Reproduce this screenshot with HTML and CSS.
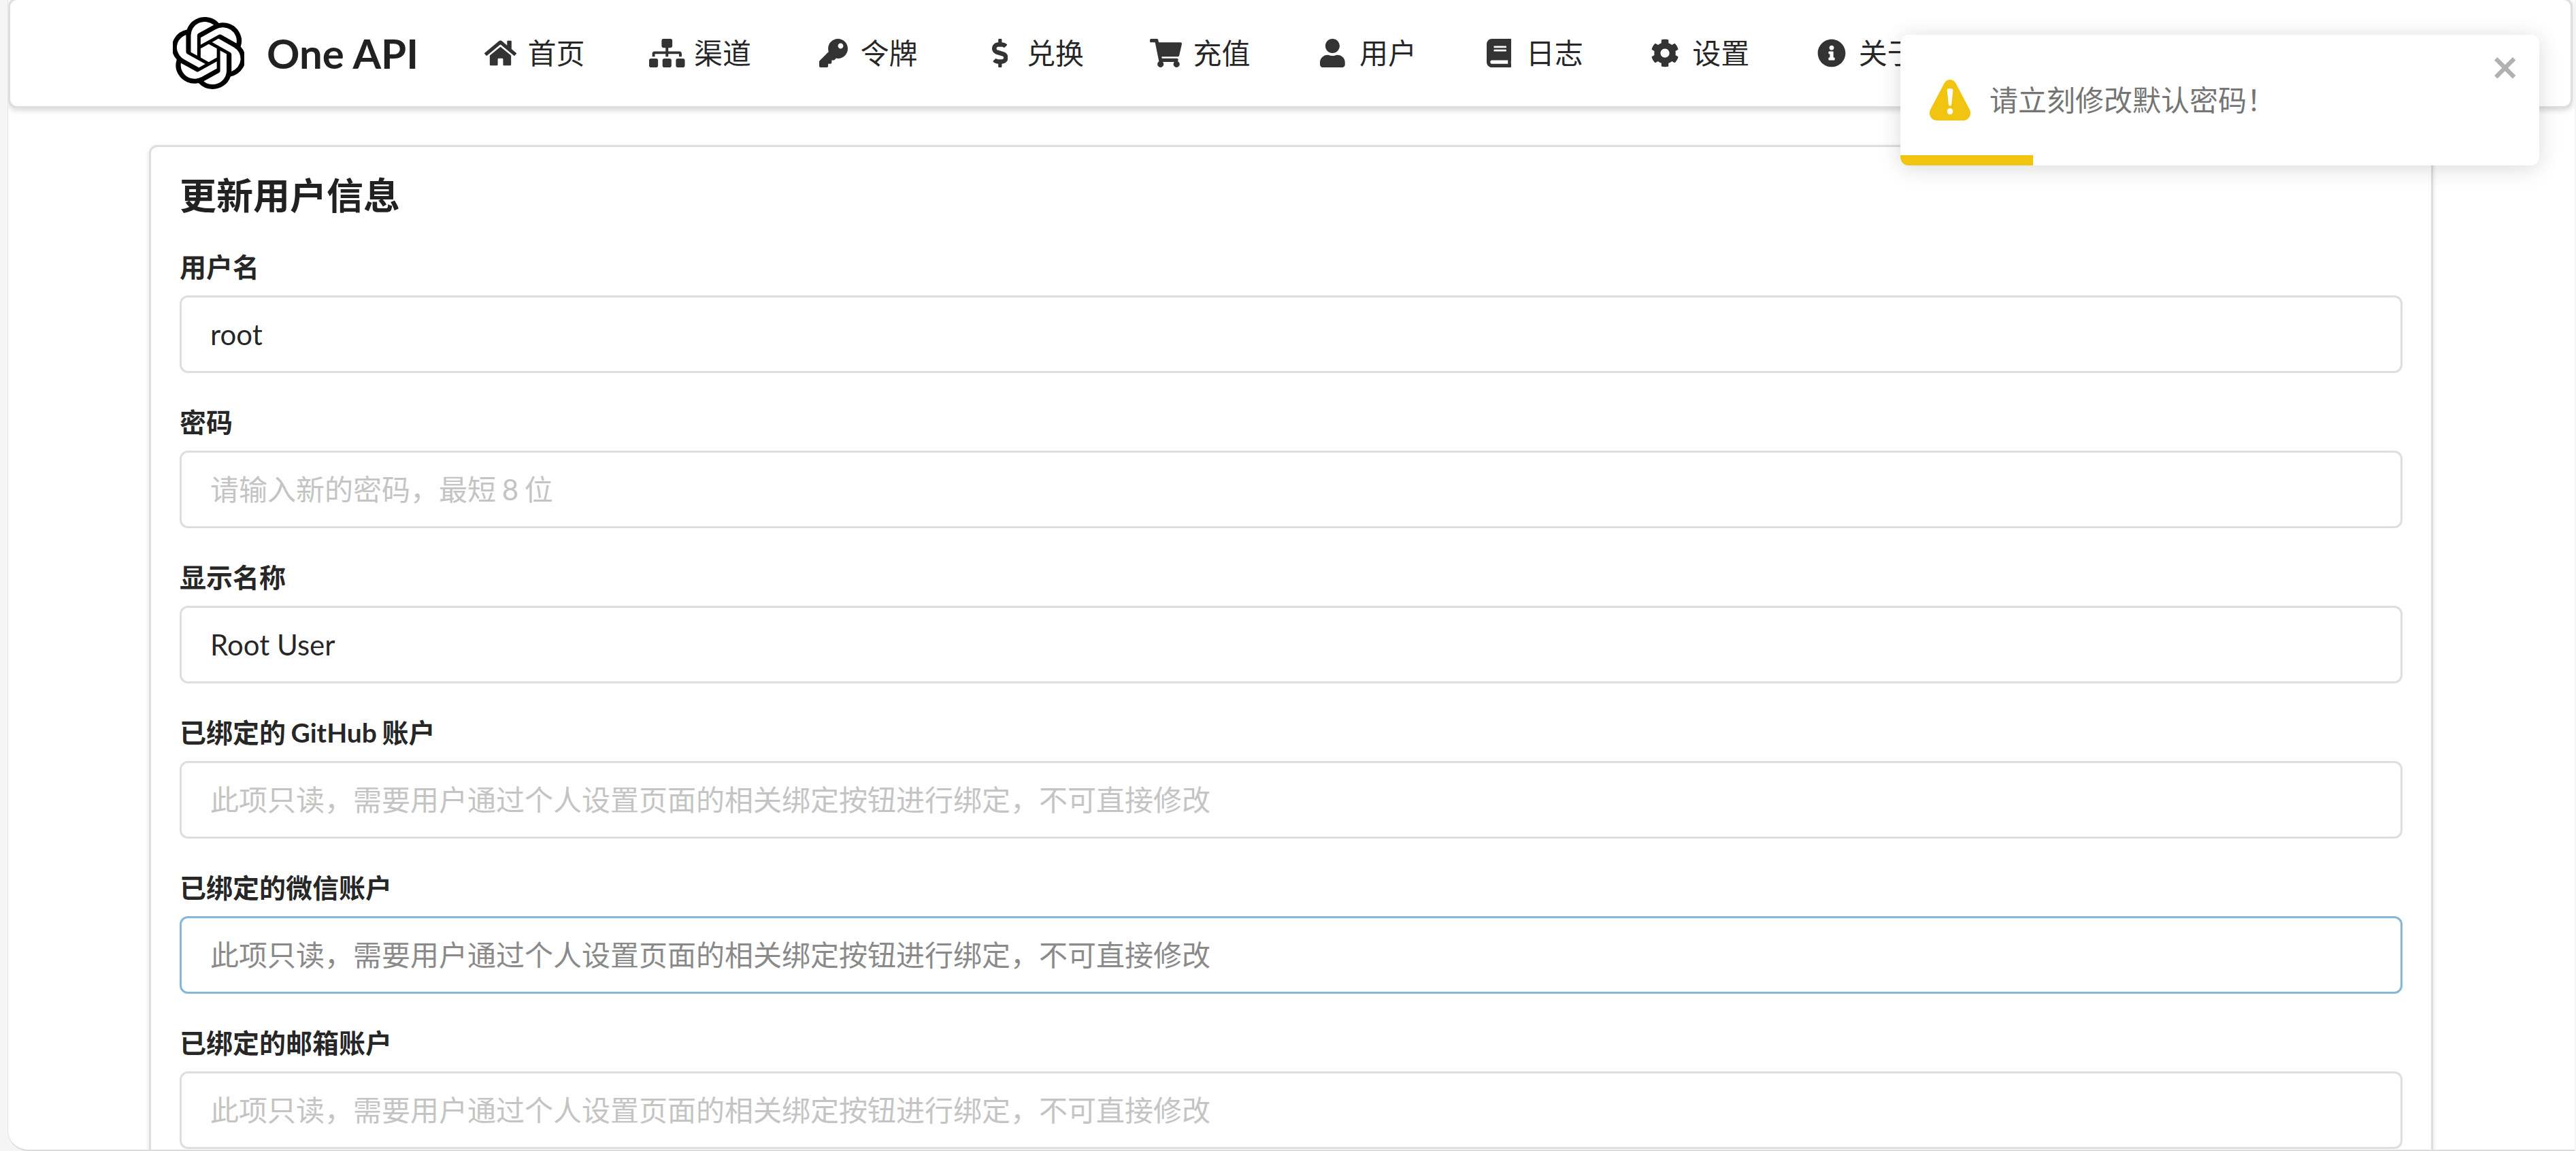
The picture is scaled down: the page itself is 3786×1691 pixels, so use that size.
FILE: index.html
```html
<!DOCTYPE html>
<html lang="zh-CN">
<head>
<meta charset="utf-8">
<title>One API</title>
<link rel="stylesheet" href="styles.css">
</head>
<body>
<div class="window">
  <header class="navbar">
    <a class="brand">
      <svg class="logo" width="105" height="106" viewBox="0.45 0 23 24" preserveAspectRatio="none"><path fill="#000" d="M22.2819 9.8211a5.9847 5.9847 0 0 0-.5157-4.9108 6.0462 6.0462 0 0 0-6.5098-2.9A6.0651 6.0651 0 0 0 4.9807 4.1818a5.9847 5.9847 0 0 0-3.9977 2.9 6.0462 6.0462 0 0 0 .7427 7.0966 5.98 5.98 0 0 0 .511 4.9107 6.051 6.051 0 0 0 6.5146 2.9001A5.9847 5.9847 0 0 0 13.2599 24a6.0557 6.0557 0 0 0 5.7718-4.2058 5.9894 5.9894 0 0 0 3.9977-2.9001 6.0557 6.0557 0 0 0-.7475-7.0729zm-9.022 12.6081a4.4755 4.4755 0 0 1-2.8764-1.0408l.1419-.0804 4.7783-2.7582a.7948.7948 0 0 0 .3927-.6813v-6.7369l2.02 1.1686a.071.071 0 0 1 .038.052v5.5826a4.504 4.504 0 0 1-4.4945 4.4944zm-9.6607-4.1254a4.4708 4.4708 0 0 1-.5346-3.0137l.142.0852 4.783 2.7582a.7712.7712 0 0 0 .7806 0l5.8428-3.3685v2.3324a.0804.0804 0 0 1-.0332.0615L9.74 19.9502a4.4992 4.4992 0 0 1-6.1408-1.6464zM2.3408 7.8956a4.485 4.485 0 0 1 2.3655-1.9728V11.6a.7664.7664 0 0 0 .3879.6765l5.8144 3.3543-2.0201 1.1685a.0757.0757 0 0 1-.071 0l-4.8303-2.7865A4.504 4.504 0 0 1 2.3408 7.872zm16.5963 3.8558L13.1038 8.364 15.1192 7.2a.0757.0757 0 0 1 .071 0l4.8303 2.7913a4.4944 4.4944 0 0 1-.6765 8.1042v-5.6772a.79.79 0 0 0-.407-.667zm2.0107-3.0231l-.142-.0852-4.7735-2.7818a.7759.7759 0 0 0-.7854 0L9.409 9.2297V6.8974a.0662.0662 0 0 1 .0284-.0615l4.8303-2.7866a4.4992 4.4992 0 0 1 6.6802 4.66zM8.3065 12.863l-2.02-1.1638a.0804.0804 0 0 1-.038-.0567V6.0742a4.4992 4.4992 0 0 1 7.3757-3.4537l-.142.0805L8.704 5.459a.7948.7948 0 0 0-.3927.6813zm1.0976-2.3654l2.602-1.4998 2.6069 1.4998v2.9994l-2.5974 1.4997-2.6067-1.4997Z"/></svg>
      <span class="brand-name">One API</span>
    </a>
    <a class="item"><span class="ic"><svg width="47" height="42" viewBox="0 0 576 512"><path d="M280.37 148.26L96 300.11V464a16 16 0 0 0 16 16l112.06-.29a16 16 0 0 0 15.92-16V368a16 16 0 0 1 16-16h64a16 16 0 0 1 16 16v95.64a16 16 0 0 0 16 16.05L464 480a16 16 0 0 0 16-16V300L295.67 148.26a12.19 12.19 0 0 0-15.3 0zM571.6 251.47L488 182.56V44.05a12 12 0 0 0-12-12h-56a12 12 0 0 0-12 12v72.61L318.47 43a48 48 0 0 0-61 0L4.34 251.47a12 12 0 0 0-1.6 16.9l25.5 31A12 12 0 0 0 45.15 301l235.22-193.74a12.19 12.19 0 0 1 15.3 0L530.9 301a12 12 0 0 0 16.9-1.6l25.5-31a12 12 0 0 0-1.7-16.93z"/></svg></span>首页</a>
    <a class="item"><span class="ic"><svg width="52.5" height="42" viewBox="0 0 640 512"><path d="M128 352H32c-17.67 0-32 14.33-32 32v96c0 17.67 14.33 32 32 32h96c17.67 0 32-14.33 32-32v-96c0-17.67-14.33-32-32-32zm-24-80h192v48h48v-48h192v48h48v-57.59c0-21.17-17.23-38.41-38.41-38.41H344v-64h40c17.67 0 32-14.33 32-32V32c0-17.67-14.33-32-32-32H256c-17.67 0-32 14.33-32 32v96c0 17.67 14.33 32 32 32h40v64H94.41C73.23 224 56 241.23 56 262.41V320h48v-48zm264 80h-96c-17.67 0-32 14.33-32 32v96c0 17.67 14.33 32 32 32h96c17.67 0 32-14.33 32-32v-96c0-17.67-14.33-32-32-32zm240 0h-96c-17.67 0-32 14.33-32 32v96c0 17.67 14.33 32 32 32h96c17.67 0 32-14.33 32-32v-96c0-17.67-14.33-32-32-32z"/></svg></span>渠道</a>
    <a class="item"><span class="ic"><svg width="42" height="42" viewBox="0 0 512 512"><path d="M512 176.001C512 273.203 433.202 352 336 352c-11.22 0-22.19-1.062-32.827-3.069l-24.012 27.014A23.999 23.999 0 0 1 261.223 384H224v40c0 13.255-10.745 24-24 24h-40v40c0 13.255-10.745 24-24 24H24c-13.255 0-24-10.745-24-24v-78.059c0-6.365 2.529-12.47 7.029-16.971l161.802-161.802C163.108 213.814 160 195.271 160 176 160 78.798 238.797.001 335.999 0 433.488-.001 512 78.511 512 176.001zM336 128c0 26.51 21.49 48 48 48s48-21.49 48-48-21.49-48-48-48-48 21.49-48 48z"/></svg></span>令牌</a>
    <a class="item"><span class="ic"><svg width="23.6" height="42" viewBox="0 0 288 512"><path d="M209.2 233.4l-108-31.6C88.7 198.2 80 186.5 80 173.5c0-16.3 13.2-29.5 29.5-29.5h66.3c12.2 0 24.2 3.7 34.2 10.5 6.1 4.1 14.3 3.1 19.5-2l34.8-34c7.1-6.9 6.1-18.4-1.8-24.5C238 74.8 207.4 64.1 176 64V16c0-8.8-7.2-16-16-16h-32c-8.8 0-16 7.2-16 16v48h-2.5C45.8 64-5.4 118.7.5 183.6c4.2 46.1 39.4 83.6 83.8 96.6l102.5 30c12.5 3.7 21.2 15.3 21.2 28.3 0 16.3-13.2 29.5-29.5 29.5h-66.3C100 368 88 364.3 78 357.5c-6.1-4.1-14.3-3.1-19.5 2l-34.8 34c-7.1 6.9-6.1 18.4 1.8 24.5 24.5 19.2 55.1 29.9 86.5 30v48c0 8.8 7.2 16 16 16h32c8.8 0 16-7.2 16-16v-48.2c46.6-.9 90.3-28.6 105.7-72.7 21.5-61.6-14.6-124.8-72.5-141.7z"/></svg></span>兑换</a>
    <a class="item"><span class="ic"><svg width="47" height="42" viewBox="0 0 576 512"><path d="M528.12 301.319l47.273-208C578.806 78.301 567.391 64 551.99 64H159.208l-9.166-44.81C147.758 8.021 137.93 0 126.529 0H24C10.745 0 0 10.745 0 24v16c0 13.255 10.745 24 24 24h69.883l70.248 343.435C147.325 417.1 136 435.222 136 456c0 30.928 25.072 56 56 56s56-25.072 56-56c0-15.674-6.447-29.835-16.824-40h209.647C430.447 426.165 424 440.326 424 456c0 30.928 25.072 56 56 56s56-25.072 56-56c0-22.172-12.888-41.332-31.579-50.405l5.517-24.276c3.413-15.018-8.002-29.319-23.403-29.319H218.117l-6.545-32h293.145c11.206 0 20.92-7.754 23.403-18.681z"/></svg></span>充值</a>
    <a class="item"><span class="ic"><svg width="36.75" height="42" viewBox="0 0 448 512"><path d="M224 256c70.7 0 128-57.3 128-128S294.7 0 224 0 96 57.3 96 128s57.3 128 128 128zm89.6 32h-16.7c-22.2 10.2-46.9 16-72.9 16s-50.6-5.8-72.9-16h-16.7C60.2 288 0 348.2 0 422.4V464c0 26.5 21.5 48 48 48h352c26.5 0 48-21.5 48-48v-41.6c0-74.2-60.2-134.4-134.4-134.4z"/></svg></span>用户</a>
    <a class="item"><span class="ic"><svg width="36.75" height="42" viewBox="0 0 448 512"><path d="M448 360V24c0-13.3-10.7-24-24-24H96C43 0 0 43 0 96v320c0 53 43 96 96 96h328c13.3 0 24-10.7 24-24v-16c0-7.5-3.5-14.3-8.9-18.7-4.2-15.4-4.2-59.3 0-74.7 5.4-4.3 8.9-11.1 8.9-18.6zM128 134c0-3.3 2.7-6 6-6h212c3.3 0 6 2.7 6 6v20c0 3.3-2.7 6-6 6H134c-3.3 0-6-2.7-6-6v-20zm0 64c0-3.3 2.7-6 6-6h212c3.3 0 6 2.7 6 6v20c0 3.3-2.7 6-6 6H134c-3.3 0-6-2.7-6-6v-20zm253.4 250H96c-17.7 0-32-14.3-32-32 0-17.6 14.4-32 32-32h285.4c-1.9 17.1-1.9 46.9 0 64z"/></svg></span>日志</a>
    <a class="item"><span class="ic"><svg width="42" height="42" viewBox="0 0 512 512"><path d="M487.4 315.7l-42.6-24.6c4.3-23.2 4.3-47 0-70.2l42.6-24.6c4.9-2.8 7.1-8.6 5.5-14-11.1-35.6-30-67.8-54.7-94.6-3.8-4.1-10-5.1-14.8-2.3L380.8 110c-17.9-15.4-38.5-27.3-60.8-35.1V25.8c0-5.6-3.9-10.5-9.4-11.7-36.7-8.2-74.3-7.8-109.2 0-5.5 1.2-9.4 6.1-9.4 11.7V75c-22.2 7.9-42.8 19.8-60.8 35.1L88.7 85.5c-4.9-2.8-11-1.9-14.8 2.3-24.7 26.7-43.6 58.9-54.7 94.6-1.7 5.4.6 11.2 5.5 14L67.3 221c-4.3 23.2-4.3 47 0 70.2l-42.6 24.6c-4.9 2.8-7.1 8.6-5.5 14 11.1 35.6 30 67.8 54.7 94.6 3.8 4.1 10 5.1 14.8 2.3l42.6-24.6c17.9 15.4 38.5 27.3 60.8 35.1v49.2c0 5.6 3.9 10.5 9.4 11.7 36.7 8.2 74.3 7.8 109.2 0 5.5-1.2 9.4-6.1 9.4-11.7v-49.2c22.2-7.9 42.8-19.8 60.8-35.1l42.6 24.6c4.9 2.8 11 1.9 14.8-2.3 24.7-26.7 43.6-58.9 54.7-94.6 1.5-5.5-.7-11.3-5.6-14.1zM256 336c-44.1 0-80-35.9-80-80s35.9-80 80-80 80 35.9 80 80-35.9 80-80 80z"/></svg></span>设置</a>
    <a class="item"><span class="ic"><svg width="42" height="42" viewBox="0 0 512 512"><path d="M256 8C119.043 8 8 119.083 8 256c0 136.997 111.043 248 248 248s248-111.003 248-248C504 119.083 392.957 8 256 8zm0 110c23.196 0 42 18.804 42 42s-18.804 42-42 42-42-18.804-42-42 18.804-42 42-42zm56 254c0 6.627-5.373 12-12 12h-88c-6.627 0-12-5.373-12-12v-24c0-6.627 5.373-12 12-12h12v-64h-12c-6.627 0-12-5.373-12-12v-24c0-6.627 5.373-12 12-12h64c6.627 0 12 5.373 12 12v100h12c6.627 0 12 5.373 12 12v24z"/></svg></span>关于</a>
  </header>

  <main class="card">
    <h3 class="title">更新用户信息</h3>
    <form class="form">
      <div class="field">
        <label class="label">用户名</label>
        <input class="input" type="text" value="root">
      </div>
      <div class="field">
        <label class="label">密码</label>
        <input class="input" type="text" placeholder="请输入新的密码，最短 8 位">
      </div>
      <div class="field">
        <label class="label">显示名称</label>
        <input class="input" type="text" value="Root User">
      </div>
      <div class="field">
        <label class="label">已绑定的 GitHub 账户</label>
        <input class="input" type="text" readonly placeholder="此项只读，需要用户通过个人设置页面的相关绑定按钮进行绑定，不可直接修改">
      </div>
      <div class="field">
        <label class="label">已绑定的微信账户</label>
        <input class="input input-focus" type="text" readonly placeholder="此项只读，需要用户通过个人设置页面的相关绑定按钮进行绑定，不可直接修改">
      </div>
      <div class="field">
        <label class="label">已绑定的邮箱账户</label>
        <input class="input" type="text" readonly placeholder="此项只读，需要用户通过个人设置页面的相关绑定按钮进行绑定，不可直接修改">
      </div>
    </form>
  </main>

  <aside class="toast">
    <svg class="toast-icon" width="60" height="60" viewBox="0 0 24 24"><path d="M23.32 17.191L15.438 2.184C14.728.833 13.416 0 11.996 0c-1.42 0-2.733.833-3.443 2.184L.533 17.448a4.744 4.744 0 000 4.368C1.243 23.167 2.555 24 3.975 24h16.05C22.22 24 24 22.044 24 19.632c0-.904-.251-1.746-.68-2.44zm-9.622 1.46c0 1.033-.724 1.823-1.698 1.823s-1.698-.79-1.698-1.822v-.043c0-1.028.724-1.822 1.698-1.822s1.698.79 1.698 1.822v.043zm.039-12.285l-.84 8.06c-.057.581-.408.943-.897.943-.49 0-.84-.367-.896-.942l-.84-8.065c-.057-.624.25-1.095.779-1.095h1.91c.528.005.84.476.784 1.1z"/></svg>
    <span class="toast-text">请立刻修改默认密码！</span>
    <svg class="toast-close" width="42" height="48" viewBox="0 0 14 16"><path d="M7.71 8.23l3.75 3.75-1.48 1.48-3.75-3.75-3.75 3.75L1 11.98l3.75-3.75L1 4.48 2.48 3l3.75 3.75L9.98 3l1.48 1.48-3.75 3.75z"/></svg>
    <div class="toast-bar"></div>
  </aside>
</div>
</body>
</html>
```

FILE: styles.css
```css
html, body {
  margin: 0;
  height: 100%;
  overflow: hidden;
  background: #f5f5f5;
}

body {
  font-family: Lato, "Noto Sans CJK SC", sans-serif;
  font-size: 42px;
  color: rgba(0, 0, 0, 0.87);
}

.window {
  position: relative;
  box-sizing: border-box;
  height: 1691px;
  margin: 0 2px 0 11px;
  background: #fff;
  border-left: 1px solid #e6e6e6;
  border-bottom: 2px solid #dcdcdc;
  border-bottom-left-radius: 30px;
  overflow: hidden;
}

.navbar {
  display: flex;
  align-items: center;
  box-sizing: border-box;
  height: 162px;
  margin: -3px 3px 0 0;
  padding-left: 191px;
  background: #fff;
  border: 3px solid #dedede;
  border-radius: 13px;
  box-shadow: 0 3px 9px rgba(34, 36, 38, 0.18);
}

.brand {
  display: flex;
  align-items: center;
  padding: 0 48px;
}

.logo {
  flex: none;
  margin-right: 33px;
}

.brand-name {
  font-size: 60px;
  font-weight: 700;
  line-height: 1;
  color: rgba(0, 0, 0, 0.87);
}

.item {
  display: flex;
  align-items: center;
  padding: 0 48px;
  line-height: 60px;
}

.ic {
  display: flex;
  align-items: center;
  justify-content: center;
  flex: none;
  width: 49.5px;
  height: 42px;
  margin-right: 15px;
}

.ic svg {
  flex: none;
  fill: #333;
}

.card {
  box-sizing: border-box;
  width: 3357px;
  margin: 54px 0 0 207px;
  padding: 42px;
  background: #fff;
  border: 3px solid #dedede;
  border-radius: 12px;
  box-shadow: 0 3px 6px rgba(34, 36, 38, 0.15);
}

.title {
  margin: 0 0 44px;
  font-size: 54px;
  font-weight: 700;
  line-height: 60px;
}

.form {
  display: grid;
  gap: 42px;
}

.label {
  display: block;
  margin-bottom: 12px;
  font-size: 39px;
  font-weight: 700;
  line-height: 60px;
  word-spacing: -2px;
}

.input {
  display: block;
  box-sizing: border-box;
  width: 100%;
  height: 114px;
  padding: 0 42px;
  font: inherit;
  color: rgba(0, 0, 0, 0.87);
  background: #fff;
  border: 3px solid #dedede;
  border-radius: 12px;
  outline: none;
}

.input::placeholder {
  color: #c4c4c4;
  opacity: 1;
  word-spacing: -2px;
}

.input-focus {
  border-color: #85b7d9;
}

.input-focus::placeholder {
  color: #8a8a8a;
}

.toast {
  position: absolute;
  top: 51px;
  left: 2781px;
  display: flex;
  align-items: center;
  box-sizing: border-box;
  width: 939px;
  height: 192px;
  padding-left: 43px;
  background: #fff;
  border-radius: 12px;
  box-shadow: 0 3px 30px rgba(0, 0, 0, 0.1), 0 6px 45px rgba(0, 0, 0, 0.05);
  overflow: hidden;
}

.toast-icon {
  flex: none;
  margin-right: 28px;
  fill: #f1c40f;
}

.toast-text {
  color: #757575;
  line-height: 60px;
}

.toast-close {
  position: absolute;
  top: 24px;
  right: 27px;
  fill: #000;
  opacity: 0.3;
}

.toast-bar {
  position: absolute;
  left: 0;
  bottom: 0;
  width: 195px;
  height: 15px;
  background: #f1c40f;
}
```
